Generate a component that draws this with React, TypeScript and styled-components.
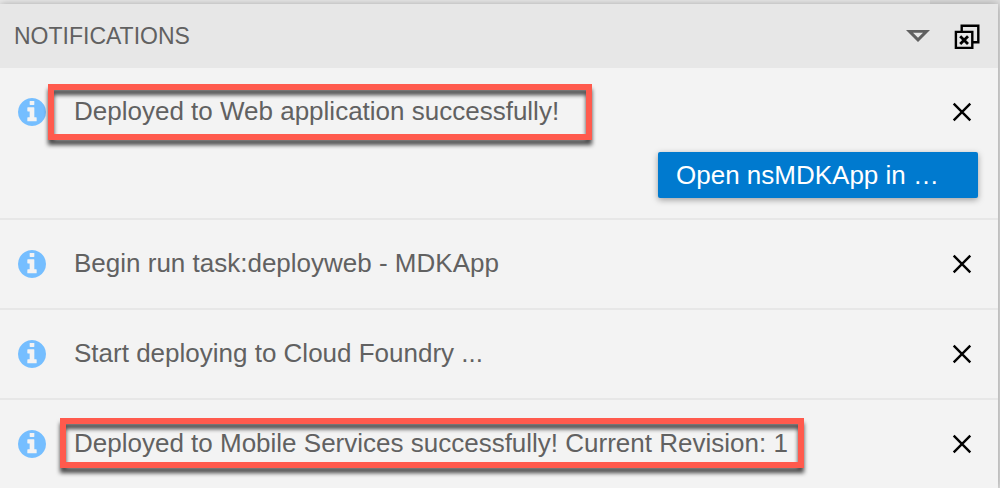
import React from "react";
import styled, { createGlobalStyle, css } from "styled-components";

const GlobalStyle = createGlobalStyle`
  *, *::before, *::after { box-sizing: border-box; }
  body {
    margin: 0;
    background: #dcdcdc;
    font-family: "Liberation Sans", Arial, sans-serif;
    color: #616161;
  }
  button { font: inherit; cursor: pointer; }
`;

const Page = styled.main`
  padding: 4px 2px 0 0;
  min-height: 100vh;
  display: flex;
  flex-direction: column;
  overflow: hidden;
  background: linear-gradient(90deg, #ececec 93%, #dedede 93%);
`;

const Panel = styled.section`
  flex: 1;
  background: #f3f3f3;
  border-radius: 0 2px 0 0;
  box-shadow: 0 0 8px rgba(0, 0, 0, 0.3);
`;

const Header = styled.header`
  display: flex;
  align-items: center;
  height: 64px;
  padding: 0 18px 0 14px;
  background: #e7e7e7;
`;

const Title = styled.h1`
  flex: 1;
  margin: 0;
  font-size: 23px;
  font-weight: 400;
  line-height: 32px;
`;

const Actions = styled.div`
  display: flex;
  gap: 22px;
`;

const IconButton = styled.button`
  display: flex;
  padding: 0;
  border: 0;
  background: none;
  color: #000;
`;

const List = styled.ul`
  margin: 0;
  padding: 0;
  list-style: none;
`;

const Item = styled.li`
  & + & { border-top: 2px solid #e7e7e7; }
`;

const ItemRow = styled.div`
  display: flex;
  align-items: center;
  height: 88px;
  padding: 0 26px 0 18px;
`;

const InfoIcon = styled.svg`
  flex: none;
  width: 28px;
  height: 28px;
  margin-right: 28px;
  fill: #75beff;
`;

const highlight = css<{ $inset?: string }>`
  &::before {
    content: "";
    position: absolute;
    inset: ${(p) => p.$inset};
    border: 6px solid #ff5a4d;
    filter: drop-shadow(0 5px 2px rgba(0, 0, 0, 0.7));
  }
`;

const Message = styled.span<{ $inset?: string }>`
  position: relative;
  padding-bottom: 2px;
  font-size: 26px;
  line-height: 32px;
  white-space: nowrap;
  ${(p) => p.$inset && highlight}
`;

const Dismiss = styled(IconButton)`
  margin-left: auto;
`;

const ItemActions = styled.div`
  display: flex;
  justify-content: flex-end;
  padding: 0 20px 20px;
  margin-top: -4px;
`;

const PrimaryButton = styled.button`
  width: 320px;
  height: 46px;
  padding: 0 18px;
  border: 0;
  border-radius: 2px;
  background: #007acf;
  color: #fff;
  font-size: 26px;
  line-height: 46px;
  text-align: left;
  white-space: nowrap;
  box-shadow: 0 2px 6px rgba(0, 0, 0, 0.35);
`;

type Notification = { text: string; highlightInset?: string; action?: string };

const notifications: Notification[] = [
  {
    text: "Deployed to Web application successfully!",
    highlightInset: "-11px -33px -11px -26px",
    action: "Open nsMDKApp in …",
  },
  { text: "Begin run task:deployweb - MDKApp" },
  { text: "Start deploying to Cloud Foundry ..." },
  {
    text: "Deployed to Mobile Services successfully! Current Revision: 1",
    highlightInset: "-9px -16px -7px -14px",
  },
];

const Info = () => (
  <InfoIcon viewBox="128 128 1536 1536" role="img" aria-label="Info">
    <path d="M1152 1376v-160q0-14-9-23t-23-9h-96v-512q0-14-9-23t-23-9h-320q-14 0-23 9t-9 23v160q0 14 9 23t23 9h96v320h-96q-14 0-23 9t-9 23v160q0 14 9 23t23 9h448q14 0 23-9t9-23zm-128-896v-160q0-14-9-23t-23-9h-192q-14 0-23 9t-9 23v160q0 14 9 23t23 9h192q14 0 23-9t9-23zm640 416q0 209-103 385.500t-279.500 279.500-385.500 103-385.500-103-279.500-279.500-103-385.500 103-385.500 279.500-279.500 385.500-103 385.500 103 279.500 279.500 103 385.500z" />
  </InfoIcon>
);

const Close = () => (
  <svg width="20" height="20" viewBox="0 0 20 20" fill="none" stroke="currentColor" strokeWidth="2.4">
    <path d="M1.700 1.700 18.300 18.300M18.300 1.700 1.700 18.300" />
  </svg>
);

export default function App() {
  return (
    <>
      <GlobalStyle />
      <Page>
        <Panel>
          <Header>
            <Title>NOTIFICATIONS</Title>
            <Actions>
              <IconButton aria-label="Hide notifications">
                <svg width="26" height="26" viewBox="0 0 26 26">
                  <path fill="#616161" fillRule="evenodd" d="M0 7h24L12 19zM7 9.800l5 5 5-5z" />
                </svg>
              </IconButton>
              <IconButton aria-label="Clear all notifications">
                <svg width="26" height="26" viewBox="0 0 26 26" fill="none" stroke="currentColor" strokeWidth="2.400">
                  <path d="M7.700 9V2.700H24.300V19.300H18" />
                  <path d="M1.900 8.900H18.300V25H1.900z" />
                  <path d="M6.200 13.200l7.800 7.800M14 13.200L6.200 21" strokeWidth="2.800" />
                </svg>
              </IconButton>
            </Actions>
          </Header>
          <List>
            {notifications.map((n) => (
              <Item key={n.text}>
                <ItemRow>
                  <Info />
                  <Message $inset={n.highlightInset}>{n.text}</Message>
                  <Dismiss aria-label="Dismiss">
                    <Close />
                  </Dismiss>
                </ItemRow>
                {n.action && (
                  <ItemActions>
                    <PrimaryButton>{n.action}</PrimaryButton>
                  </ItemActions>
                )}
              </Item>
            ))}
          </List>
        </Panel>
      </Page>
    </>
  );
}
